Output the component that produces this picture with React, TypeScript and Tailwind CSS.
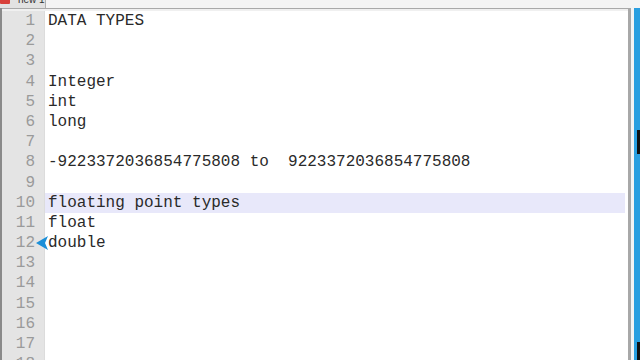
const lines: string[] = [
  "DATA TYPES",
  "",
  "",
  "Integer",
  "int",
  "long",
  "",
  "-9223372036854775808 to  9223372036854775808",
  "",
  "floating point types",
  "float",
  "double",
  "",
  "",
  "",
  "",
  "",
  "",
]

const HIGHLIGHT = 10
const MARKER = 12

export default function App() {
  return (
    <div className="w-[640px] h-[360px] overflow-hidden flex flex-col bg-[#f0f0f0] font-['Liberation_Mono',monospace]">
      {/* tab strip, mostly cut off */}
      <div className="h-[8px] flex shrink-0 overflow-hidden">
        <div className="w-[46px] bg-[#e2e2e2] border-r border-[#b0b0b0] relative">
          <div className="absolute left-0 -top-[3px] w-[10px] h-[7px] bg-[#d8403a] rounded-[1px]" />
          <span className="absolute left-[18px] -top-[6px] text-[10px] leading-[12px] text-[#333] font-['Liberation_Sans',sans-serif]">
            new 1
          </span>
        </div>
        <div className="flex-1 bg-[#f4f4f4]" />
      </div>
      <div className="flex-1 flex min-h-0">
        <div className="w-[2px] bg-[#8a8a8a]" />
        <div className="flex-1 flex flex-col min-w-0 border-t border-[#a9a9a9]">
          <div className="flex-1 flex min-h-0 pt-[2px] overflow-hidden">
            <div className="w-[43px] bg-[#e4e4e4] border-r border-[#dcdcdc] flex flex-col">
              {lines.map((_, i) => (
                <div
                  key={i}
                  className="h-[20.2px] shrink-0 leading-[20.2px] text-[16px] text-right pr-[9px] text-[#9a9a9a] relative"
                >
                  {i + 1}
                  {i + 1 === MARKER && (
                    <svg className="absolute right-[-5px] top-[3px]" width="13" height="14" viewBox="0 0 13 14">
                      <path d="M0 7 L12 0 L9 7 L12 14 Z" fill="#1b8fd8" />
                    </svg>
                  )}
                </div>
              ))}
            </div>
            <div className="flex-1 bg-white flex flex-col pr-[3px]">
              {lines.map((t, i) => (
                <div
                  key={i}
                  className={
                    "h-[20.2px] shrink-0 leading-[20.2px] text-[16px] pl-[3px] whitespace-pre text-[#2a2a2a] " +
                    (i + 1 === HIGHLIGHT ? "bg-[#e8e8fa]" : "")
                  }
                >
                  {t}
                </div>
              ))}
            </div>
          </div>
        </div>
        <div className="w-[3px] bg-[#a8a8a8] border-t border-[#a9a9a9]" />
        <div className="w-[3px] bg-[#f4f4f4]" />
        <div className="w-[6px] bg-[#2a9fe0] flex flex-col">
          <div className="h-[122px]" />
          <div className="h-[24px] ml-[3px] bg-[#111]" />
          <div className="flex-1" />
          <div className="h-[18px] ml-[3px] bg-[#111]" />
        </div>
      </div>
    </div>
  )
}
